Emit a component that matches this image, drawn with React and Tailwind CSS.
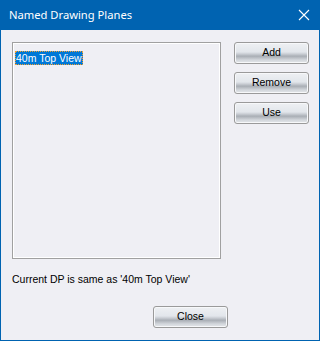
import React from "react";

function WinButton({ children, className = "" }) {
  return (
    <button
      className={
        "h-[22px] w-[75px] rounded-[3px] border border-[#9a9a9a] text-[10.5px] text-black " +
        "bg-[linear-gradient(to_bottom,#eef0f3_0%,#e2e6eb_45%,#c9cdd3_55%,#a9aeb5_66%,#d3d7dc_85%,#e4e7ea_100%)] " +
        "shadow-[inset_0_0_0_1px_#f7f8fa] " +
        className
      }
    >
      {children}
    </button>
  );
}

export default function App() {
  return (
    <div className="w-[320px] h-[341px] flex flex-col bg-[#0063b1] font-['Liberation_Sans',Arial,sans-serif]">
      {/* title bar */}
      <div className="h-[30px] flex items-center justify-between pl-[9px] pr-[9px] text-white">
        <span className="text-[11.2px] font-['Noto_Sans',sans-serif]">Named Drawing Planes</span>
        <svg width="12" height="12" viewBox="0 0 12 12" className="mr-[1px]">
          <path d="M1 1L11 11M11 1L1 11" stroke="white" strokeWidth="1.1" fill="none" />
        </svg>
      </div>

      {/* body */}
      <div className="flex-1 mx-px mb-px bg-[#efeff4] flex flex-col pl-[11px] pr-[10px] pt-[12px]">
        <div className="flex gap-[13px]">
          <div className="w-[209px] h-[217px] border border-[#a0a0a0] bg-[#efeff4] shadow-[inset_0_0_0_1px_#ffffff] p-[2px] pr-0 pb-0">
            <div className="inline-block bg-[#0078d7] text-white text-[10.5px] leading-[12px] px-[1px] py-px outline outline-1 outline-dotted outline-[#f0a030] -outline-offset-1">
              40m Top View
            </div>
          </div>
          <div className="flex flex-col gap-[8px]">
            <WinButton>Add</WinButton>
            <WinButton>Remove</WinButton>
            <WinButton>Use</WinButton>
          </div>
        </div>
        <div className="mt-[14px] text-[10.5px] text-black leading-[13px]">
          Current DP is same as '40m Top View'
        </div>
        <div className="mt-[20px] flex pl-[141px]">
          <WinButton>Close</WinButton>
        </div>
      </div>
    </div>
  );
}
